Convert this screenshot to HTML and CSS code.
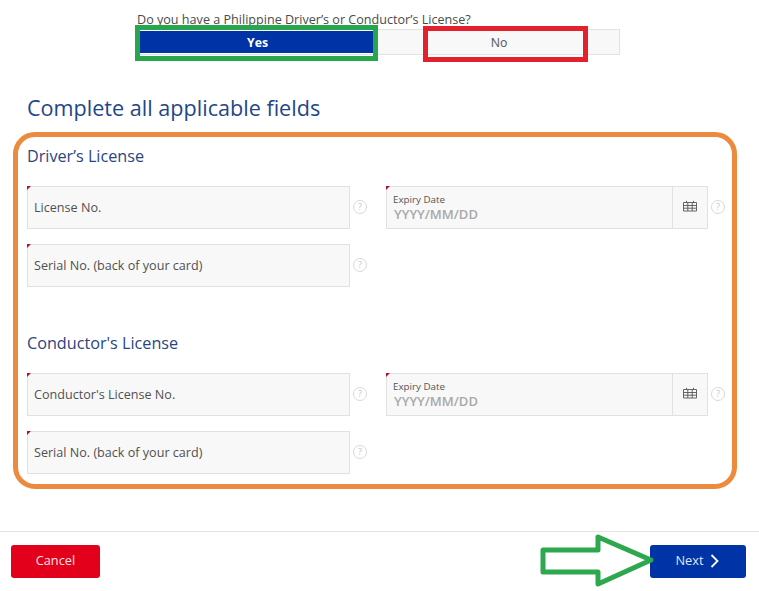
FILE: index.html
```html
<!DOCTYPE html>
<html lang="en">
<head>
<meta charset="utf-8">
<title>License details</title>
<link rel="stylesheet" href="styles.css">
</head>
<body>
<div class="page">
  <section class="question">
    <p class="question-label">Do you have a Philippine Driver’s or Conductor’s License?</p>
    <div class="segment">
      <button class="seg seg-on">Yes</button>
      <button class="seg seg-off">No</button>
    </div>
  </section>

  <h1 class="title">Complete all applicable fields</h1>

  <section class="group">
    <h2 class="subtitle">Driver’s License</h2>
    <div class="row">
      <div class="cell">
        <div class="field req"><span class="ph">License No.</span></div>
        <span class="help">?</span>
      </div>
      <div class="cell">
        <div class="field req date">
          <div class="date-text"><span class="mini">Expiry Date</span><span class="fmt">YYYY/MM/DD</span></div>
          <span class="cal"><svg width="14" height="12" viewBox="0 0 14 12"><path d="M.5 2.5h13v8.5H.5zM.5 5.5h13M.5 8.2h13M4.8 2.5V11M9.2 2.5V11M3.5.8v1.7M10.5.8v1.7" fill="none" stroke="#555" stroke-width=".9"/></svg></span>
        </div>
        <span class="help">?</span>
      </div>
    </div>
    <div class="row">
      <div class="cell">
        <div class="field req"><span class="ph">Serial No. (back of your card)</span></div>
        <span class="help">?</span>
      </div>
    </div>

    <h2 class="subtitle subtitle-next">Conductor's License</h2>
    <div class="row">
      <div class="cell">
        <div class="field req"><span class="ph">Conductor's License No.</span></div>
        <span class="help">?</span>
      </div>
      <div class="cell">
        <div class="field req date">
          <div class="date-text"><span class="mini">Expiry Date</span><span class="fmt">YYYY/MM/DD</span></div>
          <span class="cal"><svg width="14" height="12" viewBox="0 0 14 12"><path d="M.5 2.5h13v8.5H.5zM.5 5.5h13M.5 8.2h13M4.8 2.5V11M9.2 2.5V11M3.5.8v1.7M10.5.8v1.7" fill="none" stroke="#555" stroke-width=".9"/></svg></span>
        </div>
        <span class="help">?</span>
      </div>
    </div>
    <div class="row">
      <div class="cell">
        <div class="field req"><span class="ph">Serial No. (back of your card)</span></div>
        <span class="help">?</span>
      </div>
    </div>
  </section>

  <footer class="footer">
    <button class="btn btn-cancel">Cancel</button>
    <button class="btn btn-next">Next <svg class="chev" width="9" height="14" viewBox="0 0 9 14"><path d="M1.5 1l6 6-6 6" fill="none" stroke="#fff" stroke-width="1.8"/></svg></button>
  </footer>

  <div class="mark mark-green"></div>
  <div class="mark mark-red"></div>
  <div class="mark mark-orange"></div>
  <svg class="mark-arrow" width="759" height="591" viewBox="0 0 759 591"><path d="M543 550H598V537L651 560 598 584V572H543Z" fill="none" stroke="#2ea84f" stroke-width="5" stroke-linejoin="round"/></svg>
</div>
</body>
</html>
```
FILE: styles.css
```css
* { box-sizing: border-box; }
html, body { margin: 0; padding: 0; background: #fff; }
body { font-family: "Open Sans", "Liberation Sans", sans-serif; color: #444; }
.page { position: relative; width: 759px; height: 591px; overflow: hidden; }

.question { padding: 11px 139px 0 137px; }
.question-label { margin: 0; font-size: 12.6px; line-height: 17px; color: #4a4a4a; }
.segment { display: flex; height: 26px; margin-left: 2px; margin-top: 1px; background: #f8f8f8; border: 1px solid #e2e2e2; }
.seg { font-family: inherit; font-size: 12.3px; border: 0; padding: 0; }
.seg-on { width: 235px; background: #0033a6; color: #fff; font-weight: 700; border: 1px solid #fff; border-width: 1px 0; }
.seg-off { flex: 1; background: transparent; color: #555; padding-left: 4px; }

.title { margin: 38px 0 0 27px; font-size: 21.6px; line-height: 29px; font-weight: 400; color: #1f4788; }

.group { padding: 23px 0 0 27px; }
.subtitle { margin: 0 0 19px; font-size: 16.2px; line-height: 22px; font-weight: 400; color: #2a4580; }
.subtitle-next { margin-top: 45px; }
.row { display: flex; gap: 13px; margin-bottom: 15px; }
.cell { display: flex; align-items: center; width: 346px; }
.cell + .cell { width: 339px; }
.field { position: relative; width: 323px; height: 43px; display: flex; align-items: center; background: #f8f8f8; border: 1px solid #e1e1e1; padding-left: 6px; }
.cell + .cell .field { width: 322px; }
.req::before { content: ""; position: absolute; left: -1px; top: -1px; border-top: 4px solid #b3122f; border-right: 4px solid transparent; }
.ph { font-size: 12.6px; color: #505050; }
.help { flex: none; width: 14px; height: 14px; border: 1px solid #d9d9d9; border-radius: 50%; font-size: 9px; line-height: 12px; text-align: center; color: #c4c4c4; margin: 0 0 2px 3px; }
.date.field { padding: 0; }
.date-text { flex: 1; display: flex; flex-direction: column; padding: 1px 0 0 6px; }
.mini { font-size: 9.8px; line-height: 12px; color: #555; }
.fmt { font-size: 13px; line-height: 17px; font-weight: 600; color: #a8a8a8; padding-left: 1px; }
.cal { flex: none; align-self: stretch; width: 35px; border-left: 1px solid #e1e1e1; display: flex; align-items: center; justify-content: center; padding-bottom: 3px; }

.footer { position: absolute; left: 0; right: 0; top: 531px; height: 60px; border-top: 1px solid #e3e3e3; padding: 13px 13px 0 11px; display: flex; justify-content: space-between; align-items: flex-start; }
.btn { height: 33px; border: 0; border-radius: 3px; color: #fff; font-family: inherit; font-size: 12.8px; padding: 0 0 3px; display: flex; align-items: center; justify-content: center; }
.btn-cancel { width: 89px; background: #e2001a; color: #ffe3e6; }
.btn-next { width: 96px; background: #0033a6; gap: 6px; color: #dfe7f7; padding-right: 2px; }
.chev { margin-top: 2px; }

.mark { position: absolute; pointer-events: none; }
.mark-green { left: 135px; top: 25px; width: 243px; height: 36px; border: 5px solid #27a64e; }
.mark-red { left: 423px; top: 26px; width: 165px; height: 36px; border: 5px solid #e3202c; }
.mark-orange { left: 13px; top: 132px; width: 724px; height: 357px; border: 5px solid #ec8a3e; border-radius: 22px; }
.mark-arrow { position: absolute; left: 0; top: 0; pointer-events: none; }
```
